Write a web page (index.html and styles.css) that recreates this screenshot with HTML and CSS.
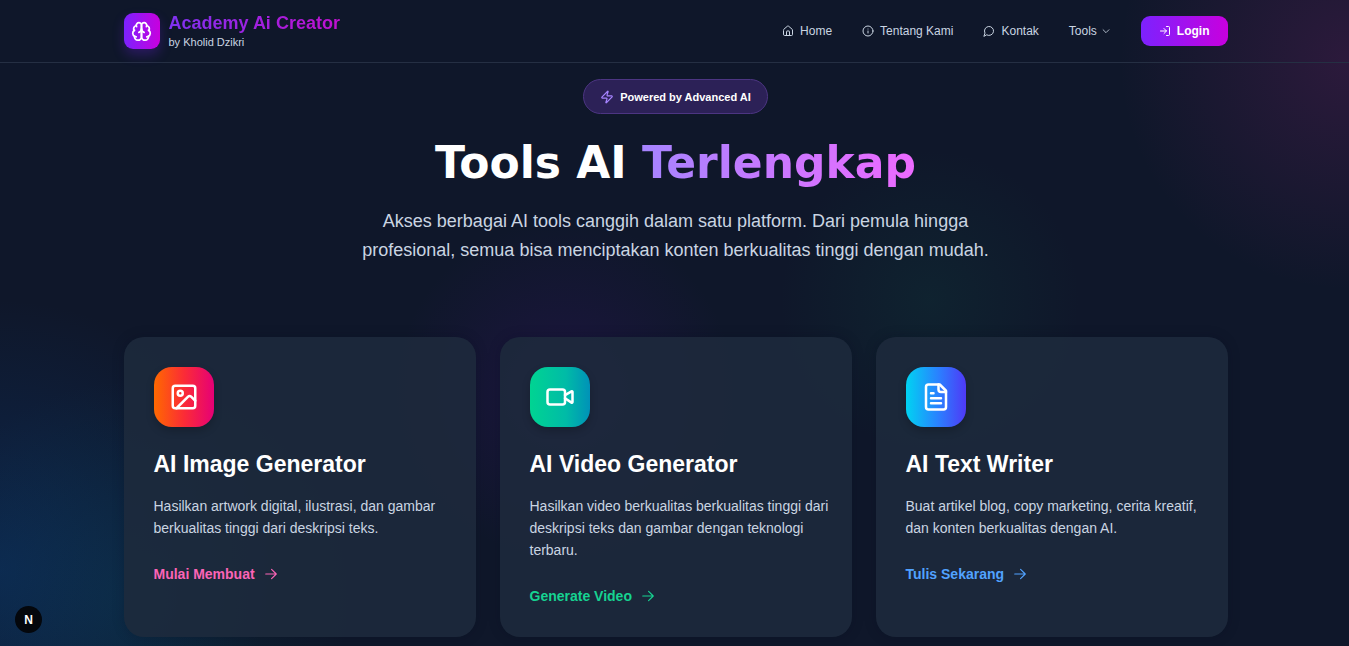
FILE: index.html
```html
<!DOCTYPE html>
<html lang="id">
<head>
    <meta charset="UTF-8">
    <meta name="viewport" content="width=device-width, initial-scale=1.0">
    <title>Academy Ai Creator</title>
    <link rel="stylesheet" href="styles.css">
</head>
<body>
<header class="header">
    <div class="container header-inner">
        <a class="brand" href="#">
            <span class="brand-logo">
                <svg class="icon" width="21" height="21" viewBox="0 0 24 24">
                    <path d="M12 5a3 3 0 1 0-5.997.125 4 4 0 0 0-2.526 5.77 4 4 0 0 0 .556 6.588A4 4 0 1 0 12 18Z"/>
                    <path d="M12 5a3 3 0 1 1 5.997.125 4 4 0 0 1 2.526 5.77 4 4 0 0 1-.556 6.588A4 4 0 1 1 12 18Z"/>
                    <path d="M15 13a4.5 4.5 0 0 1-3-4 4.5 4.5 0 0 1-3 4"/>
                    <path d="M17.599 6.5a3 3 0 0 0 .399-1.375M6.003 5.125A3 3 0 0 0 6.401 6.5M3.477 10.896a4 4 0 0 1 .585-.396M19.938 10.5a4 4 0 0 1 .585.396M6 18a4 4 0 0 1-1.967-.516M19.967 17.484A4 4 0 0 1 18 18"/>
                </svg>
            </span>
            <span class="brand-text">
                <span class="brand-name">Academy Ai Creator</span>
                <span class="brand-by">by Kholid Dzikri</span>
            </span>
        </a>
        <nav class="nav">
            <a class="nav-link" href="#">
                <svg class="icon" width="12" height="12" viewBox="0 0 24 24">
                    <path d="M15 21v-8a1 1 0 0 0-1-1h-4a1 1 0 0 0-1 1v8"/>
                    <path d="M3 10a2 2 0 0 1 .709-1.528l7-5.999a2 2 0 0 1 2.582 0l7 5.999A2 2 0 0 1 21 10v9a2 2 0 0 1-2 2H5a2 2 0 0 1-2-2z"/>
                </svg>
                Home
            </a>
            <a class="nav-link" href="#">
                <svg class="icon" width="12" height="12" viewBox="0 0 24 24">
                    <circle cx="12" cy="12" r="10"/>
                    <path d="M12 16v-4M12 8h.01"/>
                </svg>
                Tentang Kami
            </a>
            <a class="nav-link" href="#">
                <svg class="icon" width="12" height="12" viewBox="0 0 24 24">
                    <path d="M7.9 20A9 9 0 1 0 4 16.1L2 22Z"/>
                </svg>
                Kontak
            </a>
            <button class="nav-link nav-tools" type="button">
                Tools
                <svg class="icon" width="10" height="10" viewBox="0 0 24 24">
                    <path d="m5 9 7 7 7-7"/>
                </svg>
            </button>
            <button class="login" type="button">
                <svg class="icon" width="12" height="12" viewBox="0 0 24 24">
                    <path d="M15 3h4a2 2 0 0 1 2 2v14a2 2 0 0 1-2 2h-4M10 17l5-5-5-5M15 12H3"/>
                </svg>
                Login
            </button>
        </nav>
    </div>
</header>
<main class="container">
    <section class="hero">
        <div class="badge">
            <svg class="icon" width="14" height="14" viewBox="0 0 24 24">
                <path d="M4 14a1 1 0 0 1-.78-1.63l9.9-10.2a.5.5 0 0 1 .86.46l-1.92 6.02A1 1 0 0 0 13 10h7a1 1 0 0 1 .78 1.63l-9.9 10.2a.5.5 0 0 1-.86-.46l1.92-6.02A1 1 0 0 0 11 14z"/>
            </svg>
            Powered by Advanced AI
        </div>
        <h1>Tools AI <span class="highlight">Terlengkap</span></h1>
        <p class="lead">Akses berbagai AI tools canggih dalam satu platform. Dari pemula hingga profesional, semua bisa menciptakan konten berkualitas tinggi dengan mudah.</p>
    </section>
    <section class="cards">
        <article class="card">
            <div class="card-icon card-icon-image">
                <svg class="icon" width="30" height="30" viewBox="0 0 24 24">
                    <rect x="3" y="3" width="18" height="18" rx="2"/>
                    <circle cx="9" cy="9" r="2"/>
                    <path d="m21 15-3.086-3.086a2 2 0 0 0-2.828 0L6 21"/>
                </svg>
            </div>
            <h2>AI Image Generator</h2>
            <p>Hasilkan artwork digital, ilustrasi, dan gambar berkualitas tinggi dari deskripsi teks.</p>
            <a class="card-link pink" href="#">
                Mulai Membuat
                <svg class="icon" width="14" height="14" viewBox="0 0 24 24"><path d="M3 12h18M13 4l8 8-8 8"/></svg>
            </a>
        </article>
        <article class="card">
            <div class="card-icon card-icon-video">
                <svg class="icon" width="30" height="30" viewBox="0 0 24 24">
                    <path d="m16 13 5.223 3.482a.5.5 0 0 0 .777-.416V7.87a.5.5 0 0 0-.752-.432L16 10.5"/>
                    <rect x="2" y="6" width="14" height="12" rx="2"/>
                </svg>
            </div>
            <h2>AI Video Generator</h2>
            <p>Hasilkan video berkualitas berkualitas tinggi dari deskripsi teks dan gambar dengan teknologi terbaru.</p>
            <a class="card-link green" href="#">
                Generate Video
                <svg class="icon" width="14" height="14" viewBox="0 0 24 24"><path d="M3 12h18M13 4l8 8-8 8"/></svg>
            </a>
        </article>
        <article class="card">
            <div class="card-icon card-icon-text">
                <svg class="icon" width="30" height="30" viewBox="0 0 24 24">
                    <path d="M15 2H6a2 2 0 0 0-2 2v16a2 2 0 0 0 2 2h12a2 2 0 0 0 2-2V7Z"/>
                    <path d="M14 2v4a2 2 0 0 0 2 2h4M10 9H8M16 13H8M16 17H8"/>
                </svg>
            </div>
            <h2>AI Text Writer</h2>
            <p>Buat artikel blog, copy marketing, cerita kreatif, dan konten berkualitas dengan AI.</p>
            <a class="card-link blue" href="#">
                Tulis Sekarang
                <svg class="icon" width="14" height="14" viewBox="0 0 24 24"><path d="M3 12h18M13 4l8 8-8 8"/></svg>
            </a>
        </article>
    </section>
</main>
<button class="dev-badge" type="button">N</button>
</body>
</html>
```
FILE: styles.css
```css
* {
  box-sizing: border-box;
}

body {
  margin: 0;
  min-height: 100vh;
  font-family: "Liberation Sans", Arial, sans-serif;
  color: #fff;
  background-color: #0f172a;
  /* soft colour glows behind the page */
  background-image:
    radial-gradient(circle 230px at 100% 60px, rgba(160, 36, 130, 0.2), transparent),
    radial-gradient(circle 270px at 0 570px, rgba(8, 72, 150, 0.32), transparent),
    radial-gradient(circle 220px at 130px 600px, rgba(6, 100, 110, 0.2), transparent),
    radial-gradient(circle 170px at 565px 390px, rgba(70, 16, 130, 0.24), transparent),
    radial-gradient(circle 150px at 930px 300px, rgba(16, 100, 80, 0.15), transparent);
}

button {
  font-family: inherit;
  border: none;
  background: none;
  cursor: pointer;
}

a {
  color: inherit;
  text-decoration: none;
}

.icon {
  fill: none;
  stroke: currentColor;
  stroke-width: 2;
  stroke-linecap: round;
  stroke-linejoin: round;
  flex-shrink: 0;
}

.container {
  max-width: 1154px;
  margin: 0 auto;
  padding: 0 24px 0 26px;
}

.header {
  border-bottom: 1px solid #252f43;
}

.header-inner {
  display: flex;
  align-items: center;
  justify-content: space-between;
  height: 62px;
}

.brand {
  display: flex;
  align-items: center;
  gap: 9px;
}

.brand-logo {
  display: flex;
  align-items: center;
  justify-content: center;
  width: 36px;
  height: 36px;
  border-radius: 9px;
  background: linear-gradient(90deg, #7c22fe, #c800de);
  box-shadow: 0 6px 12px rgba(124, 34, 254, 0.25);
}

.brand-text {
  display: flex;
  flex-direction: column;
}

.brand-name {
  font-size: 18px;
  line-height: 22px;
  font-weight: bold;
  color: transparent;
  background: linear-gradient(90deg, #7f32f0, #c010d0);
  background-clip: text;
  -webkit-background-clip: text;
}

.brand-by {
  font-size: 11px;
  line-height: 16px;
  color: #cad5e2;
}

.nav {
  display: flex;
  align-items: center;
  gap: 30px;
}

.nav-link {
  display: flex;
  align-items: center;
  gap: 6px;
  padding: 0;
  font-size: 12px;
  line-height: 20px;
  font-weight: 500;
  color: #cad5e2;
}

.nav-tools {
  gap: 4px;
}

.login {
  display: flex;
  align-items: center;
  gap: 6px;
  height: 30px;
  padding: 0 18px;
  border-radius: 9px;
  font-size: 12px;
  font-weight: bold;
  color: #fff;
  background: linear-gradient(90deg, #7c22fe, #c800de);
}

.hero {
  display: flex;
  flex-direction: column;
  align-items: center;
  padding: 16px 0 72px;
  text-align: center;
}

.badge {
  display: flex;
  align-items: center;
  gap: 6px;
  height: 35px;
  padding: 0 16px;
  border: 1px solid #4c3582;
  border-radius: 18px;
  font-size: 11px;
  font-weight: bold;
  background: #2c2157;
}

.badge .icon {
  color: #a684ff;
}

h1 {
  margin: 20px 0 15px;
  font-family: "DejaVu Sans", Verdana, sans-serif;
  font-size: 44px;
  line-height: 58px;
  font-weight: 900;
}

.highlight {
  color: transparent;
  background: linear-gradient(90deg, #a684ff, #ed6aff);
  background-clip: text;
  -webkit-background-clip: text;
}

.lead {
  max-width: 660px;
  margin: 0;
  font-size: 18px;
  line-height: 29px;
  color: #cad5e2;
}

.cards {
  display: grid;
  grid-template-columns: repeat(3, 1fr);
  gap: 24px;
}

.card {
  padding: 30px 20px 30px 30px;
  border-radius: 20px;
  background: rgba(30, 42, 60, 0.88);
  box-shadow: 0 0 12px rgba(8, 12, 30, 0.25);
}

.card-icon {
  display: flex;
  align-items: center;
  justify-content: center;
  width: 60px;
  height: 60px;
  border-radius: 18px;
  box-shadow: 0 4px 8px rgba(0, 0, 0, 0.2);
}

.card-icon-image {
  background: linear-gradient(90deg, #ff6900, #fb2c36 50%, #e60076);
}

.card-icon-video {
  background: linear-gradient(90deg, #00d492, #00bba7 60%, #0092b8);
}

.card-icon-text {
  background: linear-gradient(90deg, #00d3f2, #2b7fff 55%, #4f39f6);
}

.card h2 {
  margin: 22px 0 16px;
  font-size: 23px;
  line-height: 30px;
}

.card p {
  margin: 0 0 24px;
  font-size: 14px;
  line-height: 22px;
  color: #cad5e2;
}

.card-link {
  display: flex;
  align-items: center;
  gap: 9px;
  font-size: 14px;
  line-height: 22px;
  font-weight: bold;
}

.pink {
  color: #fb64b6;
}

.green {
  color: #16d391;
}

.blue {
  color: #51a2ff;
}

.dev-badge {
  position: fixed;
  left: 15px;
  bottom: 13px;
  width: 27px;
  height: 27px;
  padding: 0;
  border-radius: 50%;
  font-size: 12px;
  font-weight: bold;
  color: #fff;
  background: #04070c;
}

@media (max-width: 860px) {
  .cards {
    grid-template-columns: 1fr;
  }
}
```
